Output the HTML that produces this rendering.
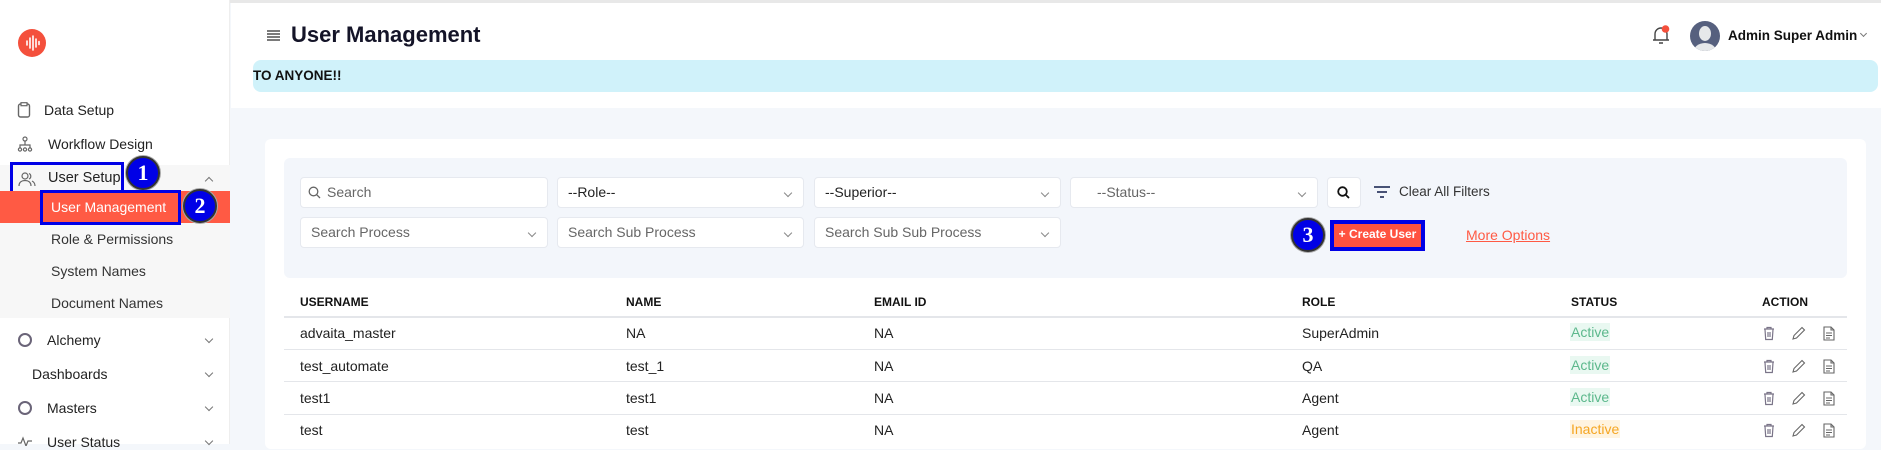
<!DOCTYPE html>
<html><head><meta charset="utf-8">
<style>
*{margin:0;padding:0;box-sizing:border-box}
body{width:1881px;height:444px;overflow:hidden;background:#f4f7fb;font-family:"Liberation Sans",sans-serif;color:#1e1e2d;position:relative}
.a{position:absolute;white-space:nowrap}
.side{left:0;top:0;width:230px;height:444px;background:#fff;border-right:1px solid #eee}
.si{font-size:14px;color:#222}
.inp{background:#fff;border:1px solid #e6e9ef;border-radius:4px;height:31px;font-size:14px;color:#666;line-height:29px;padding-left:10px}
.chev{position:absolute;right:12px;top:12px;width:6px;height:6px;border-right:1px solid #888;border-bottom:1px solid #888;transform:rotate(45deg)}
.sc{position:absolute;width:6px;height:6px;border-right:1px solid #777;border-bottom:1px solid #777;transform:rotate(45deg)}
.th{font-size:12px;font-weight:bold;color:#111}
.td{font-size:14px;color:#222}
.ln{left:284px;width:1563px;height:1px;background:#e4e6ea}
.badge{width:34px;height:34px;border-radius:50%;background:#0000e6;border:2px solid #333;box-shadow:0 0 0 1px #aaa;color:#fff;font-family:"Liberation Serif",serif;font-weight:bold;font-size:22px;text-align:center;line-height:30px}
.blue{border:3px solid #0000e6}
</style></head><body>
<div class="a" style="left:0;top:0;width:1881px;height:3px;background:#e8e8e8"></div>
<div class="a side"></div>
<div class="a" style="left:231px;top:3px;width:1650px;height:105px;background:#fff"></div>
<div class="a" style="left:18px;top:29px;width:28px;height:28px;border-radius:50%;background:#f4503c"></div>
<svg class="a" style="left:18px;top:29px" width="28" height="28"><g stroke="#fff" stroke-width="1.6" stroke-linecap="round"><line x1="9" y1="12" x2="9" y2="16"/><line x1="12" y1="9" x2="12" y2="19"/><line x1="15" y1="7" x2="15" y2="21"/><line x1="18" y1="10" x2="18" y2="18"/><line x1="21" y1="12.5" x2="21" y2="15.5"/></g></svg>
<svg class="a" style="left:17px;top:102px" width="14" height="16"><rect x="1.5" y="2" width="11" height="13" rx="2" fill="none" stroke="#666" stroke-width="1.4"/><rect x="4" y="0.7" width="6" height="3" fill="#fff" stroke="#666" stroke-width="1.2"/></svg>
<div class="a si" style="left:44px;top:102px">Data Setup</div>
<svg class="a" style="left:17px;top:136px" width="16" height="16"><g fill="none" stroke="#666" stroke-width="1.2"><circle cx="8" cy="3" r="2"/><line x1="8" y1="5" x2="8" y2="9"/><path d="M3 12V9h10v3"/><circle cx="3" cy="13.5" r="1.6"/><circle cx="8" cy="13.5" r="1.6"/><circle cx="13" cy="13.5" r="1.6"/></g></svg>
<div class="a si" style="left:48px;top:136px">Workflow Design</div>
<div class="a" style="left:0;top:165px;width:230px;height:153px;background:#f7f7f7"></div>
<svg class="a" style="left:18px;top:171px" width="18" height="16"><g fill="none" stroke="#666" stroke-width="1.2"><circle cx="7" cy="5" r="3"/><path d="M1 15c0-4 3-5.5 6-5.5s6 1.5 6 5.5"/><path d="M11 2.5a3 3 0 0 1 0 5.5M14 10c2 1 3 2.5 3 5"/></g></svg>
<div class="a si" style="left:48px;top:170px;font-size:14.5px">User Setup</div>
<div class="sc" style="left:206px;top:178px;transform:rotate(225deg)"></div>
<div class="a blue" style="left:10px;top:162px;width:114px;height:32px"></div>
<div class="a badge" style="left:126px;top:156px">1</div>
<div class="a" style="left:0;top:191px;width:230px;height:32px;background:#ff5a44"></div>
<div class="a blue" style="left:40px;top:190px;width:141px;height:35px"></div>
<div class="a" style="left:51px;top:199px;font-size:14px;color:#fff">User Management</div>
<div class="a badge" style="left:183px;top:189px">2</div>
<div class="a si" style="left:51px;top:231px;color:#333">Role &amp; Permissions</div>
<div class="a si" style="left:51px;top:263px;color:#333">System Names</div>
<div class="a si" style="left:51px;top:295px;color:#333">Document Names</div>
<div class="a" style="left:18px;top:333px;width:14px;height:14px;border:2px solid #6a6478;border-radius:50%"></div>
<div class="a si" style="left:47px;top:332px">Alchemy</div>
<div class="a si" style="left:32px;top:366px">Dashboards</div>
<div class="a" style="left:18px;top:401px;width:14px;height:14px;border:2px solid #6a6478;border-radius:50%"></div>
<div class="a si" style="left:47px;top:400px">Masters</div>
<svg class="a" style="left:17px;top:436px" width="16" height="10"><path d="M1 7h3l2-5 3 8 2-5h4" fill="none" stroke="#666" stroke-width="1.2"/></svg>
<div class="a si" style="left:47px;top:434px">User Status</div>
<div class="sc" style="left:206px;top:336px"></div>
<div class="sc" style="left:206px;top:370px"></div>
<div class="sc" style="left:206px;top:404px"></div>
<div class="sc" style="left:206px;top:438px"></div>
<svg class="a" style="left:267px;top:30px" width="13" height="12"><g stroke="#222" stroke-width="1.2"><line x1="0" y1="1" x2="13" y2="1"/><line x1="0" y1="4" x2="13" y2="4"/><line x1="0" y1="7" x2="13" y2="7"/><line x1="0" y1="10" x2="13" y2="10"/></g></svg>
<div class="a" style="left:291px;top:22px;font-size:22px;font-weight:bold;color:#141428">User Management</div>
<div class="a" style="left:253px;top:60px;width:1625px;height:32px;background:#d0f2fa;border-radius:8px"></div>
<div class="a" style="left:253px;top:68px;font-size:13.5px;font-weight:bold;color:#111">TO ANYONE!!</div>
<svg class="a" style="left:1650px;top:24px" width="22" height="22"><path d="M5 16V10a6 6 0 0 1 12 0v6H5zM3 16h16M9 19h4" fill="none" stroke="#444" stroke-width="1.4"/><circle cx="15.5" cy="5" r="3.8" fill="#f4503c"/></svg>
<div class="a" style="left:1690px;top:21px;width:30px;height:30px;border-radius:50%;background:#56607e;overflow:hidden"><div style="position:absolute;left:9px;top:5px;width:12px;height:15px;border-radius:50%;background:#e6e8ea"></div><div style="position:absolute;left:3px;top:22px;width:24px;height:20px;border-radius:50%;background:#e6e8ea"></div></div>
<div class="a" style="left:1728px;top:28px;font-size:13.5px;font-weight:bold;color:#111">Admin Super Admin</div>
<div class="sc" style="left:1861px;top:31px;width:5px;height:5px"></div>
<div class="a" style="left:265px;top:139px;width:1601px;height:310px;background:#fff;border-radius:6px"></div>
<div class="a" style="left:284px;top:158px;width:1563px;height:120px;background:#f3f6fb;border-radius:6px"></div>
<div class="a inp" style="left:300px;top:177px;width:248px;padding-left:26px">Search</div>
<svg class="a" style="left:308px;top:186px" width="13" height="13"><circle cx="5.5" cy="5.5" r="4.3" fill="none" stroke="#666" stroke-width="1.3"/><line x1="8.7" y1="8.7" x2="12" y2="12" stroke="#666" stroke-width="1.3"/></svg>
<div class="a inp" style="left:557px;top:177px;width:247px;color:#222">--Role--<span class="chev"></span></div>
<div class="a inp" style="left:814px;top:177px;width:247px;color:#222">--Superior--<span class="chev"></span></div>
<div class="a inp" style="left:1070px;top:177px;width:248px;padding-left:26px">--Status--<span class="chev"></span></div>
<div class="a inp" style="left:1327px;top:177px;width:34px;padding:0"></div>
<svg class="a" style="left:1337px;top:186px" width="13" height="13"><circle cx="5.5" cy="5.5" r="4.3" fill="none" stroke="#111" stroke-width="1.8"/><line x1="8.7" y1="8.7" x2="12" y2="12" stroke="#111" stroke-width="1.8"/></svg>
<svg class="a" style="left:1374px;top:186px" width="16" height="12"><g stroke="#1e2a55" stroke-width="1.6"><line x1="0" y1="1" x2="16" y2="1"/><line x1="3" y1="6" x2="13" y2="6"/><line x1="6" y1="11" x2="10" y2="11"/></g></svg>
<div class="a" style="left:1399px;top:184px;font-size:13.5px;color:#333">Clear All Filters</div>
<div class="a inp" style="left:300px;top:217px;width:248px">Search Process<span class="chev"></span></div>
<div class="a inp" style="left:557px;top:217px;width:247px">Search Sub Process<span class="chev"></span></div>
<div class="a inp" style="left:814px;top:217px;width:247px">Search Sub Sub Process<span class="chev"></span></div>
<div class="a badge" style="left:1291px;top:218px">3</div>
<div class="a" style="left:1330px;top:220px;width:95px;height:31px;background:#0000e6"></div>
<div class="a" style="left:1334px;top:224px;width:87px;height:23px;background:#ff5240;color:#fff;font-size:12px;font-weight:bold;text-align:center;line-height:20px">+ Create User</div>
<div class="a" style="left:1466px;top:227px;font-size:14px;color:#ff5a44;text-decoration:underline">More Options</div>
<div class="a th" style="left:300px;top:295px">USERNAME</div>
<div class="a th" style="left:626px;top:295px">NAME</div>
<div class="a th" style="left:874px;top:295px">EMAIL ID</div>
<div class="a th" style="left:1302px;top:295px">ROLE</div>
<div class="a th" style="left:1571px;top:295px">STATUS</div>
<div class="a th" style="left:1762px;top:295px">ACTION</div>
<div class="a ln" style="top:316px;height:2px"></div>
<div class="a ln" style="top:349px"></div>
<div class="a ln" style="top:381px"></div>
<div class="a ln" style="top:414px"></div>
<div class="a td" style="left:300px;top:325px">advaita_master</div><div class="a td" style="left:626px;top:325px">NA</div><div class="a td" style="left:874px;top:325px">NA</div><div class="a td" style="left:1302px;top:325px">SuperAdmin</div>
<div class="a td" style="left:300px;top:358px">test_automate</div><div class="a td" style="left:626px;top:358px">test_1</div><div class="a td" style="left:874px;top:358px">NA</div><div class="a td" style="left:1302px;top:358px">QA</div>
<div class="a td" style="left:300px;top:390px">test1</div><div class="a td" style="left:626px;top:390px">test1</div><div class="a td" style="left:874px;top:390px">NA</div><div class="a td" style="left:1302px;top:390px">Agent</div>
<div class="a td" style="left:300px;top:422px">test</div><div class="a td" style="left:626px;top:422px">test</div><div class="a td" style="left:874px;top:422px">NA</div><div class="a td" style="left:1302px;top:422px">Agent</div>
<div class="a td" style="left:1570px;top:323px;background:#e9f8f1;color:#5cb88c;padding:1px 1px">Active</div>
<div class="a td" style="left:1570px;top:356px;background:#e9f8f1;color:#5cb88c;padding:1px 1px">Active</div>
<div class="a td" style="left:1570px;top:388px;background:#e9f8f1;color:#5cb88c;padding:1px 1px">Active</div>
<div class="a td" style="left:1570px;top:420px;background:#fff4e0;color:#f5a623;padding:1px 1px">Inactive</div>
<svg width="0" height="0" style="position:absolute"><defs>
<g id="ic"><g fill="none" stroke="#7a7488" stroke-width="1.2"><path d="M2 3h10M5 3V1.5h4V3M3 3.5l.7 10h6.6l.7-10M6 6v5M8 6v5"/></g>
<g fill="none" stroke="#666" stroke-width="1.1" transform="translate(30,0)"><path d="M1 13l1-3.5 8-8 2.5 2.5-8 8z"/></g>
<g fill="none" stroke="#666" stroke-width="1.1" transform="translate(61,0)"><path d="M1 1h7l3 3v10H1zM8 1v3h3M3 7h6M3 9.5h6M3 12h4"/></g></g></defs></svg>
<svg class="a" style="left:1762px;top:326px" width="80" height="16"><use href="#ic"/></svg>
<svg class="a" style="left:1762px;top:359px" width="80" height="16"><use href="#ic"/></svg>
<svg class="a" style="left:1762px;top:391px" width="80" height="16"><use href="#ic"/></svg>
<svg class="a" style="left:1762px;top:423px" width="80" height="16"><use href="#ic"/></svg>
</body></html>
